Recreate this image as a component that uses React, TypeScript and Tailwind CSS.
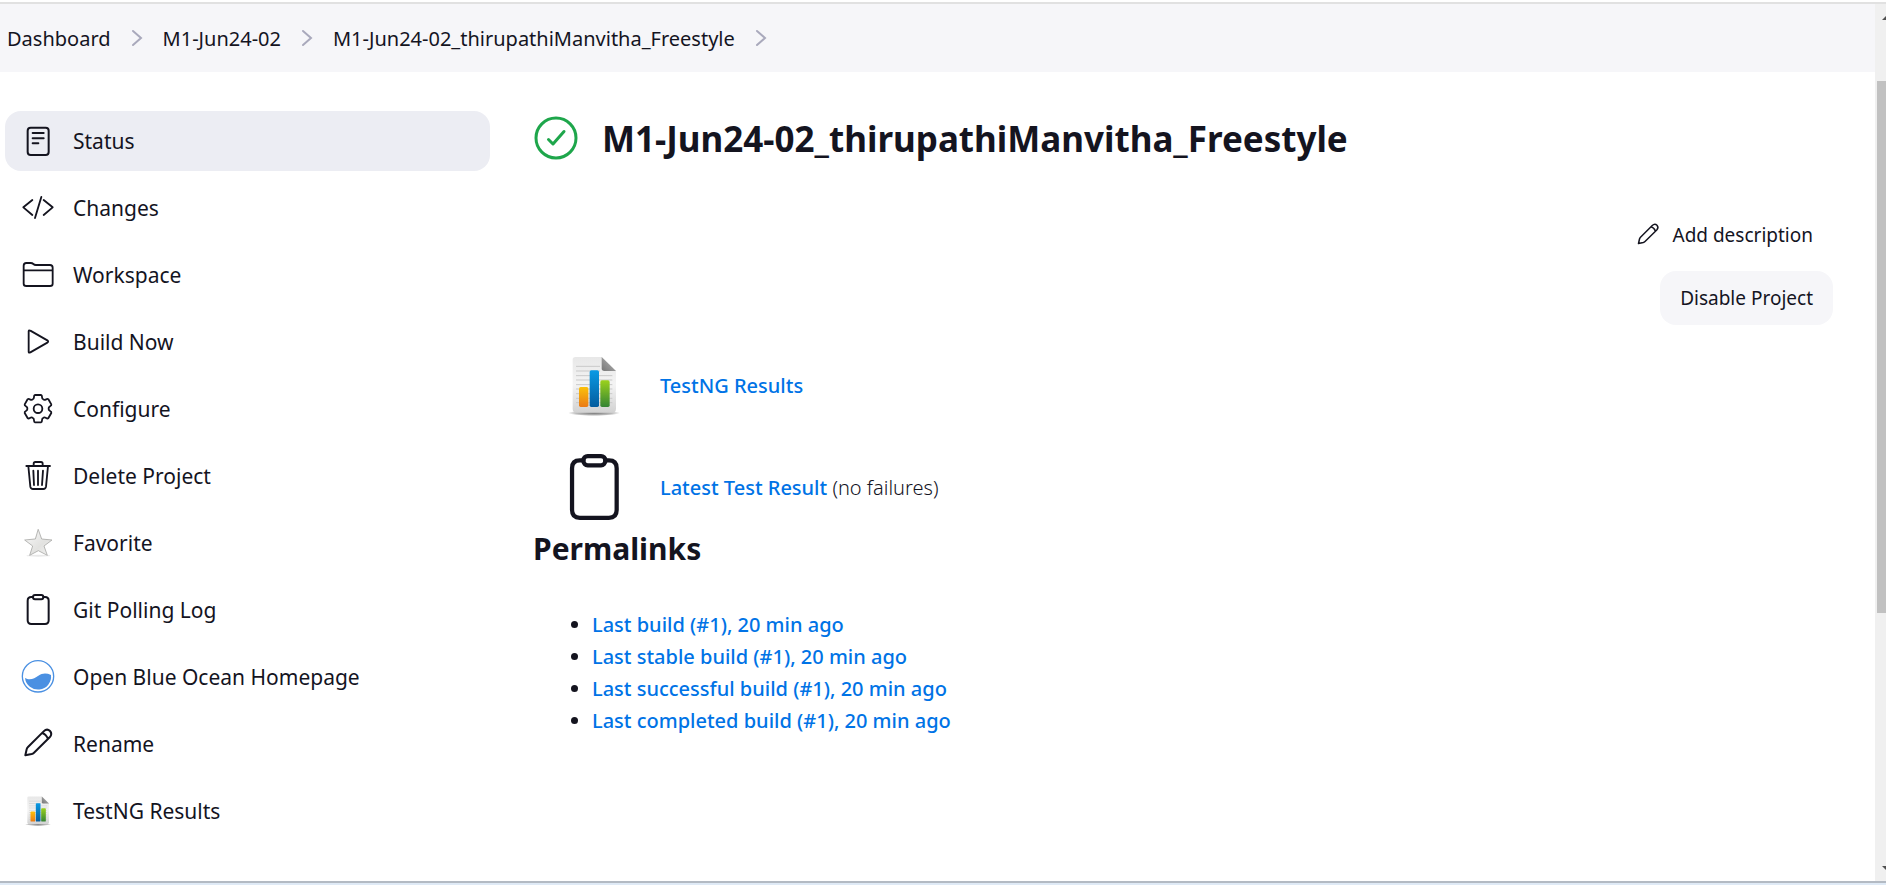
import type { ReactNode } from 'react';

function Glyph({ children, size = 'size-8', width = 5.5 }: { children: ReactNode; size?: string; width?: number }) {
  return (
    <svg
      viewBox="0 0 96 96"
      className={`${size} shrink-0 overflow-visible`}
      fill="none"
      stroke="currentColor"
      strokeWidth={width}
      strokeLinecap="round"
      strokeLinejoin="round"
      aria-hidden="true"
    >
      {children}
    </svg>
  );
}

const StatusIcon = () => (
  <Glyph width={6}>
    <rect x="17" y="8" width="63" height="82" rx="9" />
    <path d="M32 24H65M32 40H65M32 55H49" />
  </Glyph>
);

const ChangesIcon = () => (
  <Glyph>
    <path d="M31 24L4 46L31 69M65 24L92 46L65 69M58 15L39 78" />
  </Glyph>
);

const FolderIcon = () => (
  <Glyph>
    <path d="M5 74V20Q5 12 13 12H26Q31 12 34 15Q37 18 42 18H84Q92 18 92 26V74Q92 81 84 81H13Q5 81 5 74ZM5 34H92" />
  </Glyph>
);

const PlayIcon = () => (
  <Glyph>
    <path d="M20 16V77Q20 82 25 79L76 50Q81 47 76 43L25 14Q20 11 20 16Z" />
  </Glyph>
);

function gearPath() {
  const at = (deg: number, r: number) => {
    const a = (deg * Math.PI) / 180;
    return `${(48 + r * Math.sin(a)).toFixed(1)} ${(47 - r * Math.cos(a)).toFixed(1)}`;
  };
  let d = '';
  for (let t = 0; t < 360; t += 60) {
    d += `${d ? 'L' : 'M'}${at(t - 12, 42)}L${at(t + 12, 42)}Q${at(t + 17, 42)} ${at(t + 19, 37)}Q${at(t + 23, 31)} ${at(t + 30, 32)}Q${at(t + 37, 31)} ${at(t + 41, 37)}Q${at(t + 43, 42)} ${at(t + 48, 42)}`;
  }
  return `${d}Z`;
}

const GearIcon = () => (
  <Glyph>
    <path d={gearPath()} />
    <circle cx="48" cy="47" r="13" />
  </Glyph>
);

const TrashIcon = () => (
  <Glyph>
    <path d="M13 18H84M19 18L25 80Q26 87 33 87H64Q71 87 72 80L78 18M35 18V11Q35 6 40 6H57Q62 6 62 11V18M48 32V75M34 32L36 75M63 32L60 75" />
  </Glyph>
);

const StarIcon = () => (
  <Glyph width={2.5}>
    <defs>
      <linearGradient id="star" x1="0" y1="0" x2="1" y2="1">
        <stop offset="0" stopColor="#fafafa" />
        <stop offset="0.6" stopColor="#e2e2e0" />
        <stop offset="1" stopColor="#f4f4f3" />
      </linearGradient>
    </defs>
    <ellipse cx="49" cy="86" rx="36" ry="3" fill="#e9e9e9" stroke="none" />
    <path d="M49 8L59 36L90 39L66 57L76 85L49 71L23 85L32 57L8 39L39 36Z" fill="url(#star)" stroke="#a9a9a7" />
  </Glyph>
);

const ClipboardIcon = ({ large = false }: { large?: boolean }) => (
  <Glyph size={large ? 'size-17' : 'size-8'} width={6}>
    <path d="M33 9H28Q17 9 17 20V79Q17 90 28 90H69Q80 90 80 79V20Q80 9 69 9H64" />
    <rect x="33" y="3" width="31" height="13" rx="6" />
  </Glyph>
);

const OceanIcon = () => (
  <Glyph width={4}>
    <circle cx="48" cy="46" r="47" stroke="#4a90e2" fill="#fff" />
    <path d="M9 51C24 60 38 52 49 44C61 36 74 36 87 42A39 39 0 0 1 9 51Z" fill="#4a90e2" stroke="none" />
  </Glyph>
);

const PencilIcon = ({ size = 'size-8' }: { size?: string }) => (
  <Glyph size={size} width={6}>
    <path d="M10 82L14 64Q15 60 18 57L65 10Q75 0 84 9Q92 18 83 28L36 74Q33 77 29 78ZM60 15Q72 18 78 33" />
  </Glyph>
);

function ReportIcon({ size, id }: { size: string; id: string }) {
  return (
    <svg viewBox="0 0 192 192" className={`${size} shrink-0`} aria-hidden="true">
      <defs>
        <linearGradient id={`${id}p`} x1="0" y1="0" x2="0" y2="1">
          <stop offset="0" stopColor="#e8e8e8" />
          <stop offset="0.5" stopColor="#f4f4f4" />
          <stop offset="1" stopColor="#d2d2d2" />
        </linearGradient>
        <linearGradient id={`${id}f`} x1="0" y1="1" x2="1" y2="0">
          <stop offset="0" stopColor="#777" />
          <stop offset="1" stopColor="#b9b9b9" />
        </linearGradient>
        <linearGradient id={`${id}o`} x1="0" y1="0" x2="0" y2="1">
          <stop offset="0" stopColor="#fbc10a" />
          <stop offset="1" stopColor="#ea7a16" />
        </linearGradient>
        <linearGradient id={`${id}b`} x1="0" y1="0" x2="0" y2="1">
          <stop offset="0" stopColor="#0a9ae4" />
          <stop offset="1" stopColor="#045c9e" />
        </linearGradient>
        <linearGradient id={`${id}g`} x1="0" y1="0" x2="0" y2="1">
          <stop offset="0" stopColor="#9bd11d" />
          <stop offset="1" stopColor="#348434" />
        </linearGradient>
        <radialGradient id={`${id}s`}>
          <stop offset="0" stopColor="#777" />
          <stop offset="0.7" stopColor="#bbb" />
          <stop offset="1" stopColor="#fff" />
        </radialGradient>
      </defs>
      <ellipse cx="96" cy="177" rx="78" ry="9" fill={`url(#${id}s)`} />
      <path d="M40 9H119L162 51V164Q162 176 150 176H44Q32 176 32 164V17Q32 9 40 9Z" fill={`url(#${id}p)`} />
      <path
        d="M42 37H114M42 51H114M42 65H151M42 78H151M42 92H151M42 105H151M42 119H151M42 133H151M42 146H151"
        stroke="#c9c9c9"
        strokeWidth="3"
      />
      <path d="M119 9L162 51H127Q119 51 119 43Z" fill={`url(#${id}f)`} />
      <rect x="51" y="99" width="28" height="60" rx="5" fill={`url(#${id}o)`} />
      <rect x="83" y="49" width="28" height="110" rx="5" fill={`url(#${id}b)`} />
      <rect x="115" y="79" width="28" height="80" rx="5" fill={`url(#${id}g)`} />
    </svg>
  );
}

const crumbs = ['Dashboard', 'M1-Jun24-02', 'M1-Jun24-02_thirupathiManvitha_Freestyle'];

const tasks: { label: string; icon: ReactNode }[] = [
  { label: 'Status', icon: <StatusIcon /> },
  { label: 'Changes', icon: <ChangesIcon /> },
  { label: 'Workspace', icon: <FolderIcon /> },
  { label: 'Build Now', icon: <PlayIcon /> },
  { label: 'Configure', icon: <GearIcon /> },
  { label: 'Delete Project', icon: <TrashIcon /> },
  { label: 'Favorite', icon: <StarIcon /> },
  { label: 'Git Polling Log', icon: <ClipboardIcon /> },
  { label: 'Open Blue Ocean Homepage', icon: <OceanIcon /> },
  { label: 'Rename', icon: <PencilIcon /> },
  { label: 'TestNG Results', icon: <ReportIcon size="size-8" id="small" /> },
];

const permalinks = [
  'Last build (#1), 20 min ago',
  'Last stable build (#1), 20 min ago',
  'Last successful build (#1), 20 min ago',
  'Last completed build (#1), 20 min ago',
];

function Breadcrumbs() {
  return (
    <nav aria-label="Breadcrumb" className="bg-[#f6f6f9]">
      <ol className="flex h-17 items-center gap-5 pl-[7px] text-[20px]">
        {crumbs.map((crumb) => (
          <li key={crumb} className="flex items-center gap-5">
            <a href="#" className="pt-0.5">{crumb}</a>
            <svg viewBox="0 0 12 18" className="h-[18px] w-3" fill="none" stroke="#a9a9bc" strokeWidth="2" strokeLinecap="round" aria-hidden="true">
              <path d="M2 2L10 9L2 16" />
            </svg>
          </li>
        ))}
      </ol>
    </nav>
  );
}

function SidePanel() {
  return (
    <nav aria-label="Project" className="w-[485px] shrink-0">
      <ul className="flex flex-col gap-[7px]">
        {tasks.map((task, i) => (
          <li key={task.label}>
            <a
              href="#"
              aria-current={i === 0 ? 'page' : undefined}
              className="flex h-15 items-center gap-[19px] rounded-2xl pl-[17px] text-[21px] aria-[current=page]:bg-[#ecedf3]"
            >
              {task.icon}
              <span className="pt-0.5">{task.label}</span>
            </a>
          </li>
        ))}
      </ul>
    </nav>
  );
}

function ScrollTrack() {
  return (
    <div className="flex w-[11px] shrink-0 flex-col overflow-hidden bg-[#f0f0f0]" aria-hidden="true">
      <svg viewBox="0 0 4 4" className="mt-3 size-1 shrink-0 self-end fill-[#505050]">
        <path d="M0 4L4 0V4Z" />
      </svg>
      <div className="mt-[61px] ml-0.5 h-[532px] bg-[#c1c1c1]" />
      <svg viewBox="0 0 4 4" className="mt-auto mb-[11px] size-1 shrink-0 self-end fill-[#505050]">
        <path d="M0 0H4V4Z" />
      </svg>
    </div>
  );
}

export default function App() {
  return (
    <div className="flex min-h-screen flex-col border-b-2 border-[#dfeaf6] bg-white pt-0.5 font-['Noto_Sans',sans-serif] text-[#14141f]">
      <div className="flex flex-1 border-y-2 border-t-[#e1e1e1] border-b-[#b3bac3]">
        <div className="min-w-0 flex-1">
          <Breadcrumbs />
          <div className="flex gap-[43px] pt-[39px] pr-[42px] pl-[5px]">
            <SidePanel />
            <main className="min-w-0 flex-1">
              <div className="flex h-14 items-center gap-6 pl-px">
                <svg viewBox="0 0 44 44" className="-mt-0.5 size-11 shrink-0" fill="none" stroke="#1ea64b" strokeWidth="3" strokeLinecap="round" strokeLinejoin="round" role="img" aria-label="Success">
                  <circle cx="22" cy="22" r="20" />
                  <path d="M14.500 23.500L19 28L30 15.500" />
                </svg>
                <h1 className="text-[35px] font-bold">M1-Jun24-02_thirupathiManvitha_Freestyle</h1>
              </div>
              <div className="mt-10 flex flex-col items-end gap-2 text-[19px]">
                <a href="#" className="flex h-14 items-center gap-3 pr-5">
                  <PencilIcon size="size-6" />
                  Add description
                </a>
                <button type="button" className="h-13.5 rounded-2xl bg-[#f6f6f9] px-5">
                  Disable Project
                </button>
              </div>
              <div className="mt-[26px] flex flex-col gap-8 pl-[27px] text-[20px]">
                <div className="flex h-[70px] items-center gap-8">
                  <span className="flex w-17 justify-center">
                    <ReportIcon size="size-16" id="large" />
                  </span>
                  <a href="#" className="font-medium text-[#0073e6]">TestNG Results</a>
                </div>
                <div className="flex h-[70px] items-center gap-8">
                  <ClipboardIcon large />
                  <p>
                    <a href="#" className="font-medium text-[#0073e6]">Latest Test Result</a>{' '}
                    <span className="font-light">(no failures)</span>
                  </p>
                </div>
              </div>
              <h2 className="mt-1.5 text-[30px] leading-10 font-bold">Permalinks</h2>
              <ul className="mt-10 list-disc pl-[59px] text-[20px] leading-8">
                {permalinks.map((label) => (
                  <li key={label}>
                    <a href="#" className="font-medium text-[#0073e6]">{label}</a>
                  </li>
                ))}
              </ul>
            </main>
          </div>
        </div>
        <ScrollTrack />
      </div>
    </div>
  );
}
